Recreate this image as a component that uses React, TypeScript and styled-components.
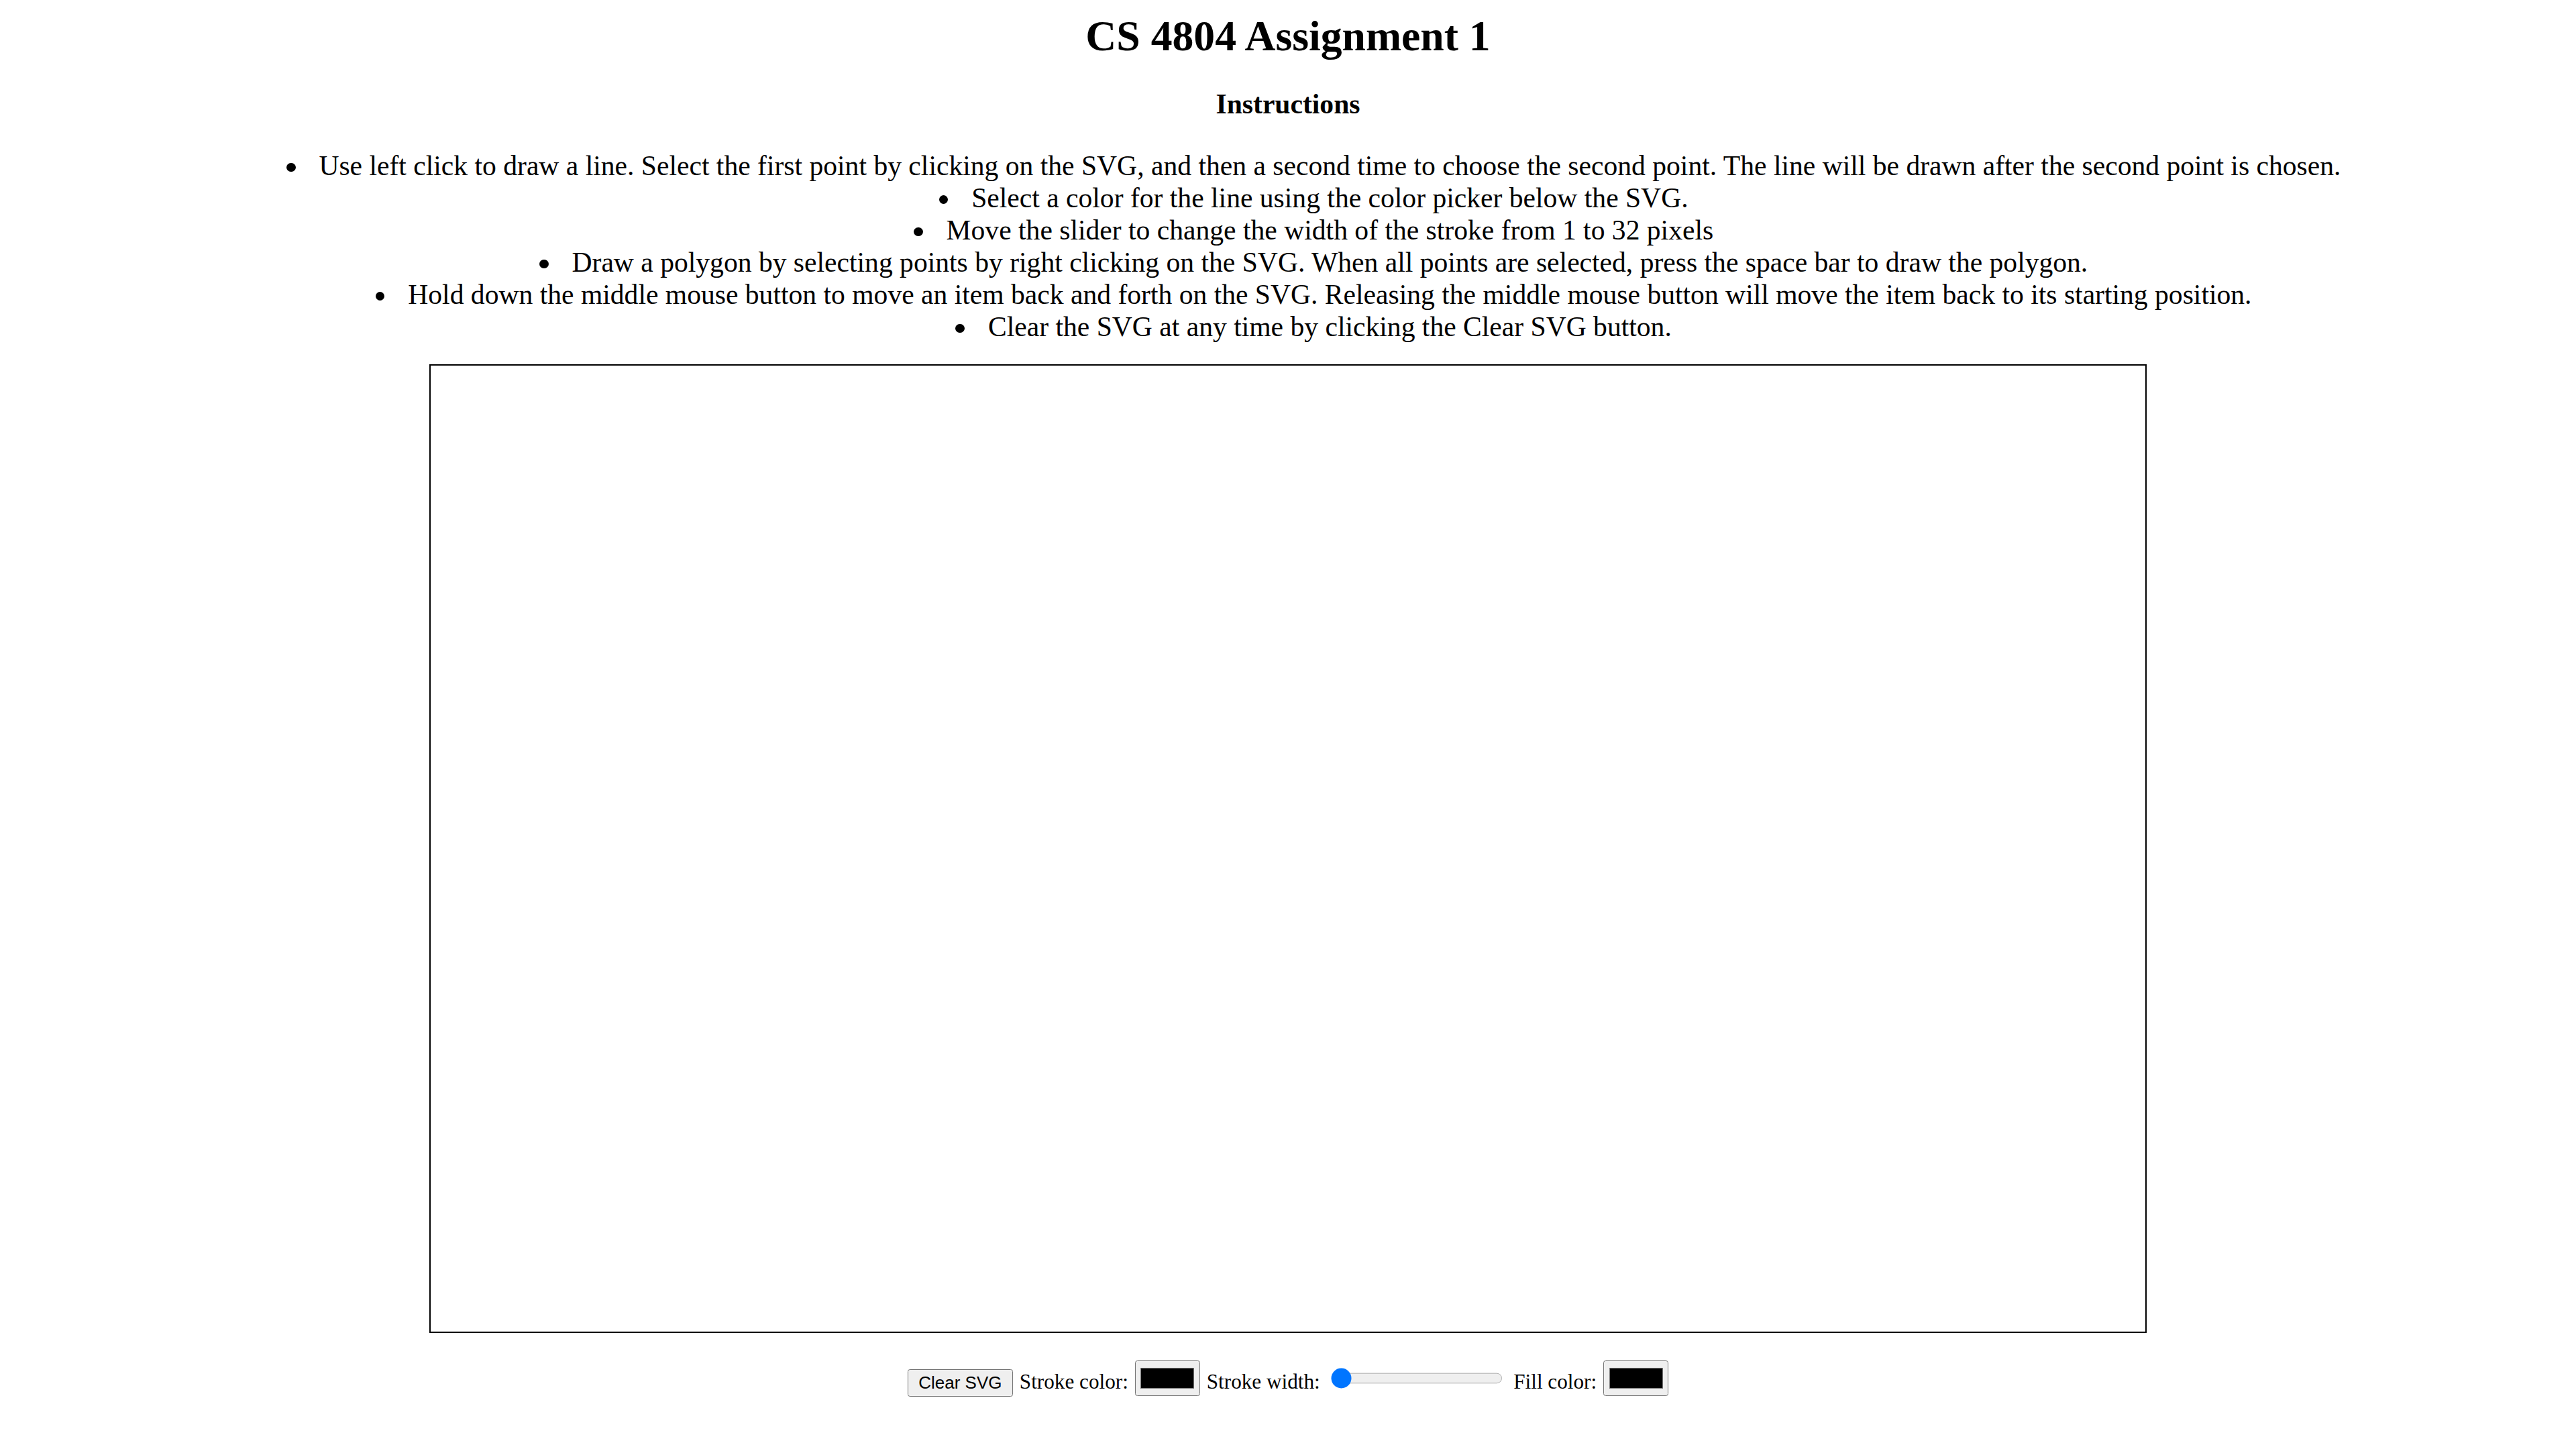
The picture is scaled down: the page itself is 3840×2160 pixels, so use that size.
import styled, { createGlobalStyle } from 'styled-components';

const GlobalStyle = createGlobalStyle`
  html {
    zoom: 2.6;
  }
  body {
    margin: 0;
    background: #fff;
    color: #000;
    font-family: "Liberation Serif", "Times New Roman", serif;
    font-size: 16px;
  }
`;

const Page = styled.div`
  padding: 6px 8px 8px;
  text-align: center;
`;

const Title = styled.h2`
  margin: 0.6px 0 0;
  font-size: 24.5px;
  font-weight: bold;
`;

const Heading = styled.p`
  margin: 15.4px 0 16px;
  font-weight: bold;
`;

const Steps = styled.ul`
  margin: 17px 0 12px;
  padding-left: 48px;
  list-style: none;
`;

// the bullet sits right before the centred text, as in the original page
const Step = styled.li`
  &::before {
    content: '';
    display: inline-block;
    width: 5.3px;
    height: 5.3px;
    border-radius: 50%;
    background: #000;
    margin-left: -18.7px;
    margin-right: 13.4px;
    vertical-align: 1.9px;
  }
`;

const Canvas = styled.svg`
  display: block;
  margin: 0 auto;
  width: 983px;
  height: 554px;
  border: 1px solid #000;
  background: #fff;
`;

const Controls = styled.div`
  zoom: 0.75;
  margin-top: 21.3px;
  font-size: 16px;
  text-align: center;
`;

const ClearButton = styled.button`
  font-family: "Liberation Sans", Arial, sans-serif;
  font-size: 13.333px;
  padding: 1px 7px;
  color: #000;
`;

const Label = styled.label`
  font-family: "Liberation Serif", "Times New Roman", serif;
  margin: 0 1px;
`;

const WidthSlider = styled.input`
  width: 131px;
  margin: 2px 3.5px;
`;

const steps = [
  'Use left click to draw a line. Select the first point by clicking on the SVG, and then a second time to choose the second point. The line will be drawn after the second point is chosen.',
  'Select a color for the line using the color picker below the SVG.',
  'Move the slider to change the width of the stroke from 1 to 32 pixels',
  'Draw a polygon by selecting points by right clicking on the SVG. When all points are selected, press the space bar to draw the polygon.',
  'Hold down the middle mouse button to move an item back and forth on the SVG. Releasing the middle mouse button will move the item back to its starting position.',
  'Clear the SVG at any time by clicking the Clear SVG button.',
];

export default function App() {
  return (
    <>
      <GlobalStyle />
      <Page>
        <Title>CS 4804 Assignment 1</Title>
        <Heading>Instructions</Heading>
        <Steps>
          {steps.map((s) => (
            <Step key={s}>{s}</Step>
          ))}
        </Steps>
        <Canvas />
        <Controls>
          <ClearButton type="button">Clear SVG</ClearButton>{' '}
          <Label htmlFor="stroke-color">Stroke color:</Label>{' '}
          <input id="stroke-color" type="color" defaultValue="#000000" />{' '}
          <Label htmlFor="stroke-width">Stroke width:</Label>{' '}
          <WidthSlider id="stroke-width" type="range" min={1} max={32} defaultValue={1} />{' '}
          <Label htmlFor="fill-color">Fill color:</Label>{' '}
          <input id="fill-color" type="color" defaultValue="#000000" />
        </Controls>
      </Page>
    </>
  );
}
